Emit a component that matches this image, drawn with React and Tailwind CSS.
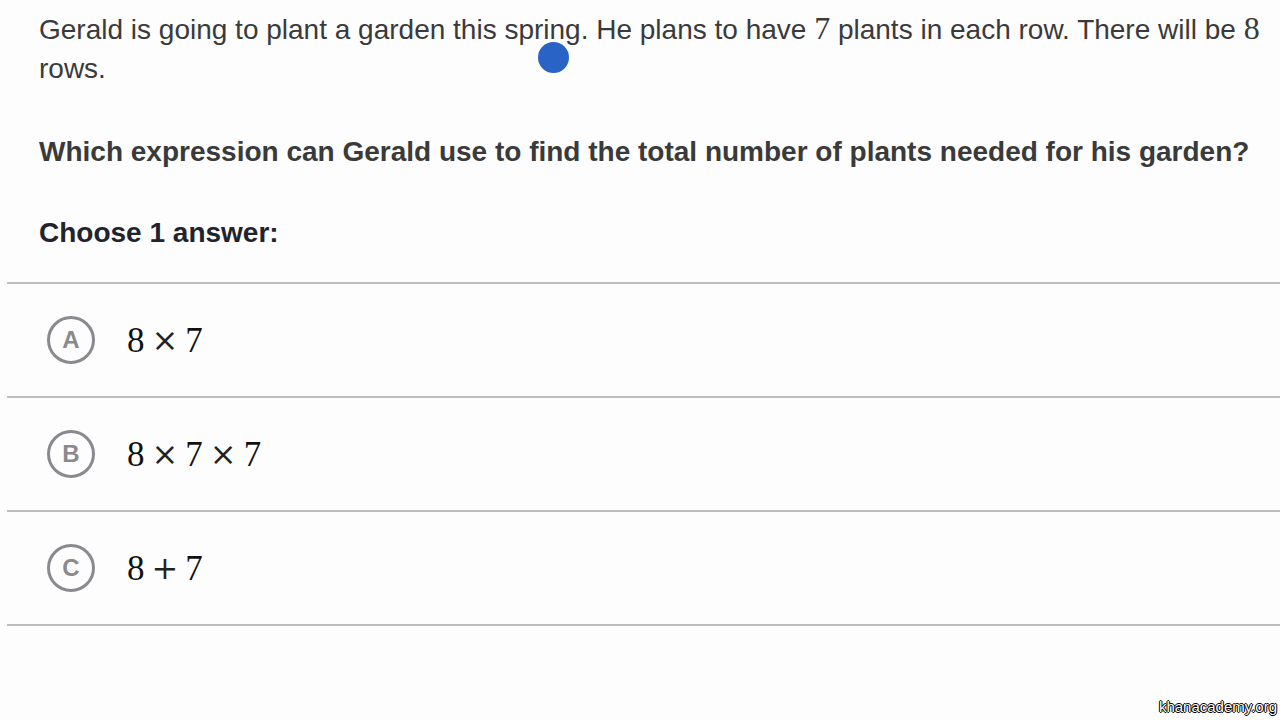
import { Fragment } from "react";

const choices = [
  { letter: "A", expr: ["8", "×", "7"] },
  { letter: "B", expr: ["8", "×", "7", "×", "7"] },
  { letter: "C", expr: ["8", "+", "7"] },
];

function MathExpr({ parts }) {
  return (
    <span className="flex items-center gap-[7px] font-['Liberation_Serif',serif] text-[35px] text-[#111] leading-none">
      {parts.map((p, i) =>
        p === "×" || p === "+" ? (
          <span key={i} className="font-['DejaVu_Serif',serif] font-light text-[32px] text-[#222]">
            {p}
          </span>
        ) : (
          <span key={i}>{p}</span>
        )
      )}
    </span>
  );
}

export default function App() {
  return (
    <div className="relative w-[1280px] h-[720px] overflow-hidden bg-[#fdfdfd] font-['Liberation_Sans',Arial,sans-serif]">
      <div className="pl-[39px] pr-[10px] pt-[9px]">
        <p className="text-[28px] leading-[39px] text-[#3a3a3a]">
          Gerald is going to plant a garden this spring. He plans to have{" "}
          <span className="font-['Liberation_Serif',serif] text-[32px]">7</span> plants in each row. There will be{" "}
          <span className="font-['Liberation_Serif',serif] text-[32px]">8</span> rows.
        </p>
        <p className="mt-[44px] text-[28px] leading-[39px] font-bold text-[#3a3a3a]">
          Which expression can Gerald use to find the total number of plants needed for his garden?
        </p>
        <p className="mt-[42px] text-[28px] leading-[39px] font-bold text-[#21242c]">Choose 1 answer:</p>
      </div>

      <div className="mt-[30px] ml-[7px]">
        <div className="h-[2px] bg-[#bdbdbd]" />
        {choices.map((c) => (
          <Fragment key={c.letter}>
            <div className="h-[112px] flex items-center pl-[40px]">
              <div className="w-[48px] h-[48px] rounded-full border-[3.5px] border-[#8a8a8e] flex items-center justify-center text-[24px] font-bold text-[#8a8a8e]">
                {c.letter}
              </div>
              <div className="ml-[32px]">
                <MathExpr parts={c.expr} />
              </div>
            </div>
            <div className="h-[2px] bg-[#bdbdbd]" />
          </Fragment>
        ))}
      </div>

      <div className="absolute left-[538px] top-[42px] w-[31px] h-[31px] rounded-full bg-[#2a63c6]" />

      <div className="absolute right-[3px] bottom-[2px] text-[15px] text-white [text-shadow:0_0_1px_#000,1px_0_0_#000,-1px_0_0_#000,0_1px_0_#000,0_-1px_0_#000]">
        khanacademy.org
      </div>
    </div>
  );
}
